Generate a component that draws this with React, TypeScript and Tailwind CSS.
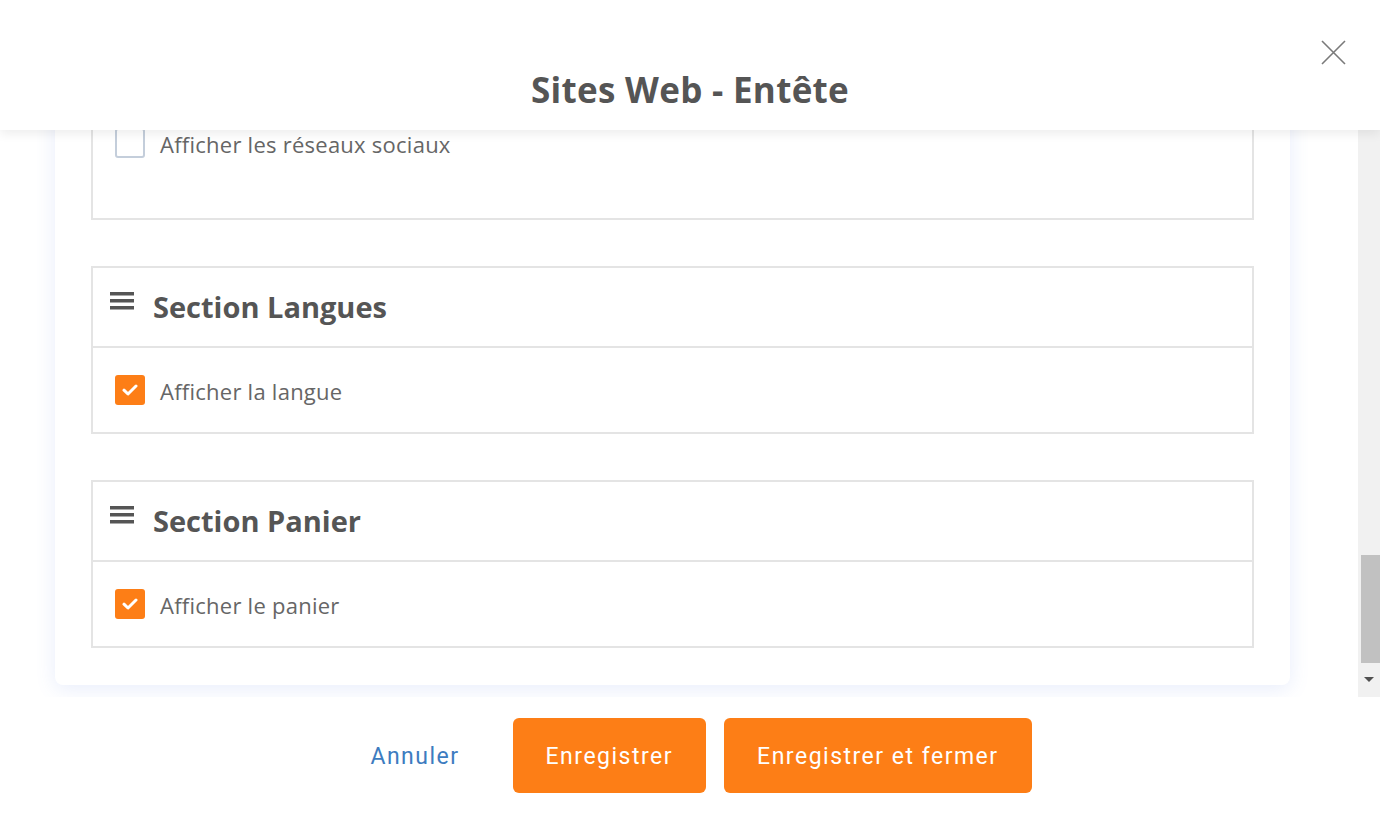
import React from "react";

const Hamburger = () => (
  <svg width="24" height="20" viewBox="0 0 24 20" className="shrink-0">
    <rect x="0" y="0" width="24" height="3.5" fill="#555" />
    <rect x="0" y="7" width="24" height="3.5" fill="#555" />
    <rect x="0" y="14" width="24" height="3.5" fill="#555" />
  </svg>
);

const Check = ({ checked }: { checked: boolean }) =>
  checked ? (
    <div className="w-[30px] h-[30px] rounded-[3px] bg-[#fd7e16] flex items-center justify-center shrink-0">
      <svg width="16" height="12" viewBox="0 0 16 12">
        <path d="M2 6.2 L6 10 L14 2" stroke="#fff" strokeWidth="3" fill="none" strokeLinecap="round" strokeLinejoin="round" />
      </svg>
    </div>
  ) : (
    <div className="w-[30px] h-[30px] rounded-[3px] border-2 border-[#c4cedb] bg-white shrink-0" />
  );

const Row = ({ checked, label }: { checked: boolean; label: string }) => (
  <div className="h-[30px] flex items-center gap-[15px] pl-[22px]">
    <Check checked={checked} />
    <span className="text-[22px] leading-[28px] tracking-[0.25px] text-[#666] pt-[2px]">{label}</span>
  </div>
);

const Section = ({ title, label }: { title: string; label: string }) => (
  <div className="border-2 border-[#e4e4e4]">
    <div className="h-[80px] border-b-2 border-[#e4e4e4] flex items-center pl-[17px] gap-[19px]">
      <div className="-mt-[10px]">
        <Hamburger />
      </div>
      <span className="text-[29px] font-bold text-[#555]">{title}</span>
    </div>
    <div className="py-[27px]">
      <Row checked label={label} />
    </div>
  </div>
);

export default function App() {
  return (
    <div
      className="w-[1380px] h-[818px] flex flex-col bg-white overflow-hidden"
      style={{ fontFamily: "'Open Sans', 'Noto Sans', sans-serif" }}
    >
      <header className="h-[130px] shrink-0 relative z-10 bg-white shadow-[0_4px_10px_rgba(0,0,0,0.07)] flex items-end justify-center pb-[14px]">
        <h1 className="text-[35px] font-bold tracking-[0.3px] text-[#555]">Sites Web - Entête</h1>
        <button className="absolute right-[34px] top-[40px] w-[25px] h-[25px]">
          <svg width="25" height="25" viewBox="0 0 25 25">
            <path d="M1 1 L24 24 M24 1 L1 24" stroke="#7a7a7a" strokeWidth="1.6" />
          </svg>
        </button>
      </header>

      <div className="h-[567px] shrink-0 flex">
        <div className="flex-1 overflow-hidden flex flex-col justify-end pb-[12px]">
          <div className="ml-[55px] w-[1235px] bg-white rounded-[8px] shadow-[0_4px_20px_rgba(90,130,230,0.14)] px-[36px] pt-[30px] pb-[37px] flex flex-col gap-[46px] shrink-0">
            <div className="border-2 border-[#e4e4e4]">
              <div className="h-[80px] border-b-2 border-[#e4e4e4] flex items-center pl-[17px] gap-[19px]">
                <Hamburger />
                <span className="text-[29px] font-bold text-[#555]">Section Réseaux sociaux</span>
              </div>
              <div className="pt-[27px] pb-[60px]">
                <Row checked={false} label="Afficher les réseaux sociaux" />
              </div>
            </div>
            <Section title="Section Langues" label="Afficher la langue" />
            <Section title="Section Panier" label="Afficher le panier" />
          </div>
        </div>
        <div className="w-[22px] bg-[#f1f1f1] flex flex-col items-center shrink-0">
          <div className="flex-1" />
          <div className="w-[19px] h-[108px] bg-[#c1c1c1] ml-[2px]" />
          <div className="h-[34px] flex items-center justify-center">
            <svg width="10" height="6" viewBox="0 0 10 6">
              <path d="M0 0 L10 0 L5 5 Z" fill="#505050" />
            </svg>
          </div>
        </div>
      </div>

      <footer className="flex-1 flex items-start justify-center gap-[18px] pt-[21px] pr-[13px]" style={{ fontFamily: "Roboto, sans-serif" }}>
        <button className="h-[75px] px-[35px] pt-[3px] text-[23px] text-[#3d7cc0] tracking-[1.5px]">Annuler</button>
        <button className="h-[75px] px-[33px] pt-[3px] rounded-[6px] bg-[#fd7e16] text-white text-[23px] tracking-[1.5px]">Enregistrer</button>
        <button className="h-[75px] px-[33px] pt-[3px] rounded-[6px] bg-[#fd7e16] text-white text-[23px] tracking-[1.5px]">Enregistrer et fermer</button>
      </footer>
    </div>
  );
}
